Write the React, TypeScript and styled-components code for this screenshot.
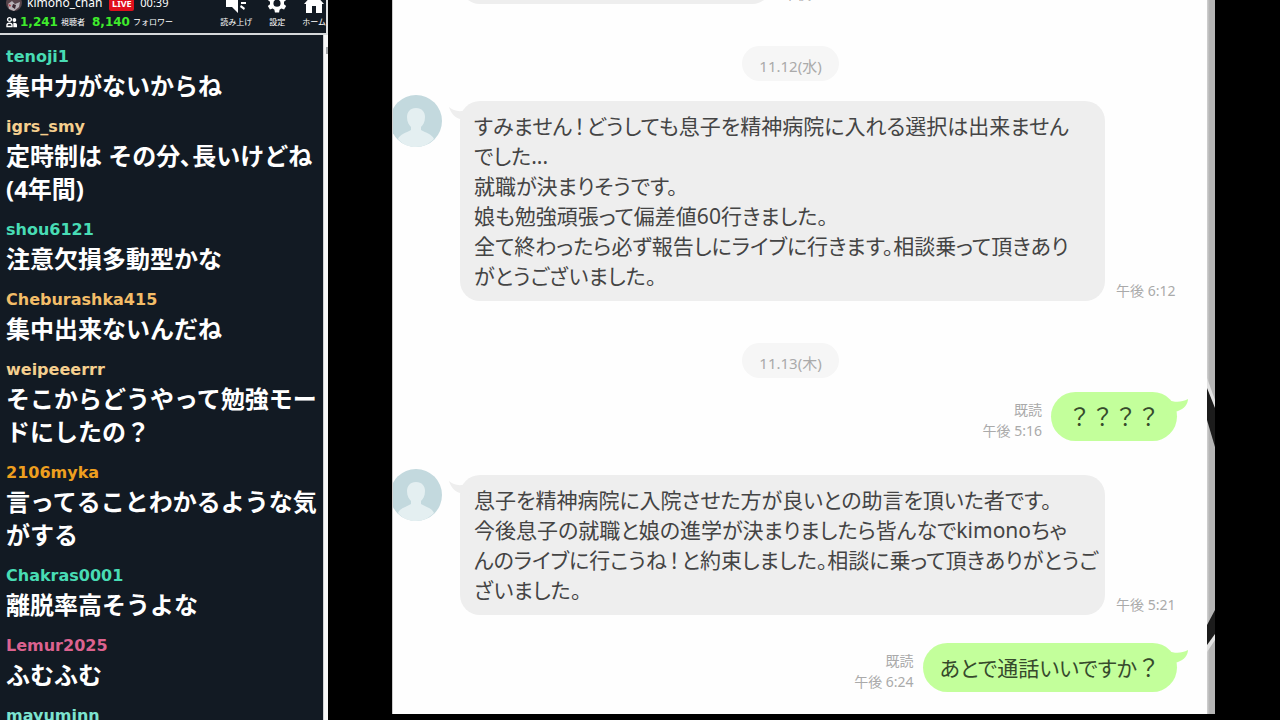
import React, { Fragment } from "react";
import styled, { createGlobalStyle } from "styled-components";

const GlobalStyle = createGlobalStyle`
  * { box-sizing: border-box; }
  html, body { margin: 0; background: #000; }
  body { font-family: "Noto Sans", "Noto Sans CJK JP", sans-serif; }
`;

const Page = styled.div`
  display: flex;
  height: 100vh;
  overflow: hidden;
  background: #000;
`;

/* ---------- live comment column ---------- */

const Sidebar = styled.aside`
  display: flex;
  flex-direction: column;
  flex: 0 0 328px;
  min-height: 0;
  overflow: hidden;
  color: #fff;
  background: #121a23;
`;

const Header = styled.header`
  display: flex;
  flex: 0 0 35px;
  align-items: flex-end;
  justify-content: space-between;
  min-height: 0;
  padding: 0 0 0 6px;
  border-right: 2px solid #dfe1e2;
  border-bottom: 2px solid #d5d8da;
  overflow: hidden;
`;

const StreamInfo = styled.div`
  display: flex;
  flex-direction: column;
  padding-bottom: 3px;
`;

const StreamRow = styled.div`
  display: flex;
  align-items: center;
  height: 22px;
  font-size: 12px;
  line-height: 20px;
  white-space: nowrap;
`;

const ChannelName = styled.span`
  margin-left: 5px;
`;

const LiveBadge = styled.span`
  width: 25px;
  height: 15px;
  margin: 0 6px 0 7px;
  border-radius: 2px;
  background: #e0101c;
  font: bold 9px/15px "Noto Sans", sans-serif;
  text-align: center;
`;

const Elapsed = styled.span`
  font-size: 11px;
`;

const Stat = styled.span`
  margin-left: 3px;
  color: #3fec2c;
  font: bold 12px/16px "DejaVu Sans", sans-serif;
`;

const StatRow = styled(StreamRow)`
  height: 16px;
  line-height: 16px;
`;

const StatLabel = styled.span`
  margin: 0 4px 0 3px;
  font: 8px/16px "Noto Sans CJK JP", sans-serif;
`;

const Tools = styled.nav`
  display: flex;
  gap: 15px;
  padding-bottom: 5px;
`;

const ToolButton = styled.button`
  display: flex;
  flex-direction: column;
  align-items: center;
  gap: 3px;
  padding: 0;
  border: 0;
  color: #fff;
  background: none;
  font: 8px/12px "Noto Sans CJK JP", sans-serif;
  white-space: nowrap;
`;

const Feed = styled.div`
  display: flex;
  flex: 1;
  min-height: 0;
`;

const CommentList = styled.ul`
  flex: 1;
  margin: 0;
  padding: 10px 0 0 6px;
  overflow: hidden;
  list-style: none;
`;

const Comment = styled.li`
  margin-bottom: 13px;
`;

const UserName = styled.div<{ $color: string }>`
  color: ${(p) => p.$color};
  font: bold 16px/24px "DejaVu Sans", sans-serif;
`;

const CommentText = styled.div`
  font: bold 24px/33px "Noto Sans", "Noto Sans CJK JP", sans-serif;
  white-space: nowrap;
`;

const CommentLine = styled.div`
  height: 33px;
`;

const ScrollTrack = styled.div`
  flex: 0 0 5px;
  padding: 12px 0 0 2px;
  border-left: 1px solid #cfd2d4;
  background: #f7f7f7;
`;

const ScrollThumb = styled.div`
  height: 7px;
  background: #a5a7a9;
`;

/* ---------- conversation window ---------- */

const Stage = styled.main`
  display: flex;
  flex: 1;
  min-width: 0;
  padding: 0 65px 6px 64px;
`;

const Conversation = styled.section`
  display: flex;
  flex: 1;
  flex-direction: column;
  justify-content: flex-end;
  min-width: 0;
  padding: 0 19px 22px 0;
  border-left: 1px solid #ccc;
  overflow: hidden;
  color: #444;
  background: #fefefe;
`;

const Backdrop = styled.div`
  flex: 0 0 8px;
  overflow: hidden;
  background: linear-gradient(90deg, #d2d2d2, #b5b5b5 30%, #b5b5b5);
`;

const DatePill = styled.div`
  align-self: center;
  flex: none;
  min-width: 97px;
  margin: 42px 0 14px;
  padding: 5px 16px 0;
  border-radius: 18px;
  color: #aaa;
  background: #f6f6f6;
  font-size: 15px;
  line-height: 30px;
  text-align: center;
`;

const Received = styled.article`
  display: flex;
  flex: none;
  align-items: flex-start;
`;

const Bubble = styled.div<{ $sent?: boolean }>`
  position: relative;
  padding: ${(p) => (p.$sent ? "10px 17px 9px" : "10px 4px 10px 14px")};
  border-radius: ${(p) => (p.$sent ? 25 : 20)}px;
  background: ${(p) => (p.$sent ? "#c3ff9b" : "#eee")};
  color: ${(p) => (p.$sent ? "#364a2c" : "#444")};
  font: 21px/30px "Noto Sans", "Noto Sans CJK JP", sans-serif;
  font-feature-settings: "palt";
  white-space: nowrap;
`;

const ReceivedBubble = styled(Bubble)`
  flex: 0 1 645px;
  margin: 6px 0 0 18px;
`;

const EarlierBubble = styled(Bubble)`
  flex: 0 1 312px;
  height: 50px;
  margin-left: 67px;
`;

const Exclamation = styled.span`
  margin: 0 2px;
`;

const Question = styled.span`
  font-size: 23px;
  line-height: 1;
  font-feature-settings: normal;
`;

const Tail = styled.svg<{ $sent?: boolean }>`
  position: absolute;
  top: 5px;
  ${(p) => (p.$sent ? "right: -11px;" : "left: -12px;")}
  width: 28px;
  height: 20px;
`;

const Meta = styled.div`
  align-self: flex-end;
  margin: 0 11px;
  color: #aaa;
  font: 14px/21px "Noto Sans", "Noto Sans CJK JP", sans-serif;
  text-align: right;
  white-space: nowrap;
`;

const SentMeta = styled(Meta)`
  margin: 0 9px 0 0;
`;

const Sent = styled.article`
  display: flex;
  flex: none;
  justify-content: flex-end;
  margin-right: 11px;
`;

const Separator = styled.div`
  flex: 0 0 28px;
`;

const AvatarBox = styled.svg`
  flex: none;
  width: 49px;
  height: 52px;
`;

function Avatar() {
  return (
    <AvatarBox viewBox="0 0 49 52" aria-hidden="true">
      <circle cx="23" cy="26" r="26" fill="#c3d9de" />
      <path
        d="M23 13c6 0 9 4 9 9 0 5-2 8-4 10v3c5 3 11 4 13 9-5 5-11 8-18 8S10 50 5 44c2-5 8-6 13-9v-3c-2-2-4-5-4-10s3-9 9-9z"
        fill="#e4eff1"
      />
    </AvatarBox>
  );
}

function BubbleTail({ sent }: { sent?: boolean }) {
  return (
    <Tail $sent={sent} viewBox="0 0 28 20" aria-hidden="true">
      {sent ? (
        <path d="M8 3C16 6 22 5 28 2C28 7 24 12 18 14L6 18z" fill="#c3ff9b" />
      ) : (
        <path d="M1 1C6 5 12 7 20 3L22 18L12 13C6 11 3 7 1 1z" fill="#eee" />
      )}
    </Tail>
  );
}

function Lines({ lines }: { lines: string[] }) {
  return (
    <>
      {lines.map((line, i) => (
        <Fragment key={i}>
          {i > 0 && <br />}
          {line.split(/(！|？+)/).map((part, j) => {
            if (part === "！") return <Exclamation key={j}>{part}</Exclamation>;
            if (part.startsWith("？")) return <Question key={j}>{part}</Question>;
            return part;
          })}
        </Fragment>
      ))}
    </>
  );
}

const comments = [
  { user: "tenoji1", color: "#48dcb4", lines: ["集中力がないからね"] },
  { user: "igrs_smy", color: "#f5cf8e", lines: ["定時制は その分､長いけどね", "(4年間)"] },
  { user: "shou6121", color: "#48dcb4", lines: ["注意欠損多動型かな"] },
  { user: "Cheburashka415", color: "#f3bd68", lines: ["集中出来ないんだね"] },
  { user: "weipeeerrr", color: "#f5cf8e", lines: ["そこからどうやって勉強モー", "ドにしたの？"] },
  { user: "2106myka", color: "#ee9f1f", lines: ["言ってることわかるような気", "がする"] },
  { user: "Chakras0001", color: "#48dcb4", lines: ["離脱率高そうよな"] },
  { user: "Lemur2025", color: "#dc628f", lines: ["ふむふむ"] },
  { user: "mayuminn", color: "#7ce3d0", lines: [] },
];

function StreamAvatar() {
  return (
    <svg width="16" height="16" viewBox="0 0 16 16" aria-hidden="true">
      <circle cx="8" cy="8" r="8" fill="#57444a" />
      <path d="M2 9l4-3 3 3 5-2-1 5-5 4-5-2z" fill="#b9b3b8" />
      <path d="M7 9l3 1-1 4-3-2z" fill="#3a2730" />
      <path d="M2 9l3 1-1 2z" fill="#b33a46" />
    </svg>
  );
}

function ViewersIcon() {
  return (
    <svg width="11" height="12" viewBox="0 0 11 12" fill="none" stroke="#fff" strokeWidth="1.4" aria-hidden="true">
      <circle cx="3.5" cy="3.5" r="1.9" />
      <path d="M1 10.5V9q0-1.8 2.5-1.8T6 9v1.5z" />
      <circle cx="8.4" cy="4" r="1.2" fill="#fff" />
      <path d="M8 7.5q2.3 0 2.3 1.6v1.4H8z" fill="#fff" />
    </svg>
  );
}

function SpeakerIcon() {
  return (
    <svg width="20" height="20" viewBox="0 0 20 20" fill="#fff" aria-hidden="true">
      <path d="M0 3h5l7-4v21l-6-6H0z" />
      <path d="M14 5l4-3 1 2-4 3zM15 9h5v2h-5zM14 14l1-2 4 3-1 2z" />
    </svg>
  );
}

function GearIcon() {
  return (
    <svg width="20" height="20" viewBox="0 0 24 24" fill="#fff" aria-hidden="true">
      <path
        fillRule="evenodd"
        d="M9.500 1h5l.6 3.300 2.200 1 3.200-1.200 2.500 4.300-2.600 2.200v2.800l2.600 2.200-2.500 4.300-3.200-1.200-2.200 1.300-.6 3.500h-5l-.6-3.500-2.200-1.300-3.200 1.200L1 15.600l2.600-2.200v-2.800L1 8.400l2.500-4.300 3.200 1.200 2.200-1zM12 8a4.300 4.300 0 100 8.600A4.300 4.300 0 0012 8z"
      />
    </svg>
  );
}

function HomeIcon() {
  return (
    <svg width="20" height="20" viewBox="0 0 20 20" fill="#fff" aria-hidden="true">
      <path d="M10 0l10 11h-2v9h-6v-7H8v7H2v-9H0z" />
    </svg>
  );
}

export default function App() {
  return (
    <Page>
      <GlobalStyle />
      <Sidebar>
        <Header>
          <StreamInfo>
            <StreamRow>
              <StreamAvatar />
              <ChannelName>kimono_chan</ChannelName>
              <LiveBadge>LIVE</LiveBadge>
              <Elapsed>00:39</Elapsed>
            </StreamRow>
            <StatRow>
              <ViewersIcon />
              <Stat>1,241</Stat>
              <StatLabel>視聴者</StatLabel>
              <Stat>8,140</Stat>
              <StatLabel>フォロワー</StatLabel>
            </StatRow>
          </StreamInfo>
          <Tools>
            <ToolButton type="button"><SpeakerIcon />読み上げ</ToolButton>
            <ToolButton type="button"><GearIcon />設定</ToolButton>
            <ToolButton type="button"><HomeIcon />ホーム</ToolButton>
          </Tools>
        </Header>
        <Feed>
          <CommentList>
            {comments.map((c) => (
              <Comment key={c.user}>
                <UserName $color={c.color}>{c.user}</UserName>
                <CommentText>
                  {c.lines.map((line) => (
                    <CommentLine key={line}>{line}</CommentLine>
                  ))}
                </CommentText>
              </Comment>
            ))}
          </CommentList>
          <ScrollTrack>
            <ScrollThumb />
          </ScrollTrack>
        </Feed>
      </Sidebar>

      <Stage>
        <Conversation>
          <Received>
            <EarlierBubble />
            <Meta>午後</Meta>
          </Received>
          <DatePill>11.12(水)</DatePill>
          <Received>
            <Avatar />
            <ReceivedBubble>
              <BubbleTail />
              <Lines
                lines={[
                  "すみません！どうしても息子を精神病院に入れる選択は出来ません",
                  "でした...",
                  "就職が決まりそうです。",
                  "娘も勉強頑張って偏差値60行きました。",
                  "全て終わったら必ず報告しにライブに行きます。相談乗って頂きあり",
                  "がとうございました。",
                ]}
              />
            </ReceivedBubble>
            <Meta>午後 6:12</Meta>
          </Received>
          <DatePill>11.13(木)</DatePill>
          <Sent>
            <SentMeta>既読<br />午後 5:16</SentMeta>
            <Bubble $sent>
              <BubbleTail sent />
              <Lines lines={["？？？？"]} />
            </Bubble>
          </Sent>
          <Separator />
          <Received>
            <Avatar />
            <ReceivedBubble>
              <BubbleTail />
              <Lines
                lines={[
                  "息子を精神病院に入院させた方が良いとの助言を頂いた者です。",
                  "今後息子の就職と娘の進学が決まりましたら皆んなでkimonoちゃ",
                  "んのライブに行こうね！と約束しました。相談に乗って頂きありがとうご",
                  "ざいました。",
                ]}
              />
            </ReceivedBubble>
            <Meta>午後 5:21</Meta>
          </Received>
          <Separator />
          <Sent>
            <SentMeta>既読<br />午後 6:24</SentMeta>
            <Bubble $sent>
              <BubbleTail sent />
              <Lines lines={["あとで通話いいですか？"]} />
            </Bubble>
          </Sent>
        </Conversation>
        <Backdrop>
          <svg width="8" height="714" viewBox="0 0 8 714" aria-hidden="true">
            <path d="M0 378L8 400V412L0 392z" fill="#e2e2e2" />
            <path d="M0 388L8 408V447L0 420z" fill="#1c1c1c" />
            <path d="M0 640L8 630V640L0 652z" fill="#e2e2e2" />
            <path d="M0 625L8 610V634L0 645z" fill="#1c1c1c" />
          </svg>
        </Backdrop>
      </Stage>
    </Page>
  );
}
